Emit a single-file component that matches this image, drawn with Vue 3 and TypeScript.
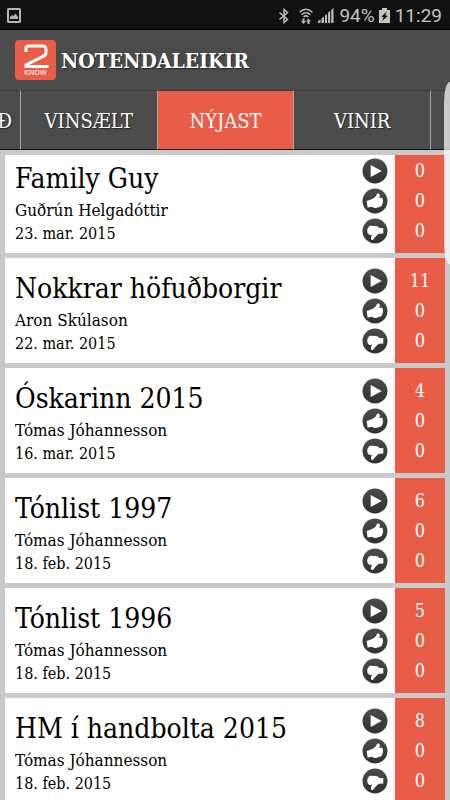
<script setup lang="ts">
interface Game {
  title: string
  author: string
  date: string
  plays: number
  likes: number
  dislikes: number
}

const tabs: string[] = ['Ð', 'VINSÆLT', 'NÝJAST', 'VINIR', '']
const activeTab = 'NÝJAST'

const games: Game[] = [
  { title: 'Family Guy', author: 'Guðrún Helgadóttir', date: '23. mar. 2015', plays: 0, likes: 0, dislikes: 0 },
  { title: 'Nokkrar höfuðborgir', author: 'Aron Skúlason', date: '22. mar. 2015', plays: 11, likes: 0, dislikes: 0 },
  { title: 'Óskarinn 2015', author: 'Tómas Jóhannesson', date: '16. mar. 2015', plays: 4, likes: 0, dislikes: 0 },
  { title: 'Tónlist 1997', author: 'Tómas Jóhannesson', date: '18. feb. 2015', plays: 6, likes: 0, dislikes: 0 },
  { title: 'Tónlist 1996', author: 'Tómas Jóhannesson', date: '18. feb. 2015', plays: 5, likes: 0, dislikes: 0 },
  { title: 'HM í handbolta 2015', author: 'Tómas Jóhannesson', date: '18. feb. 2015', plays: 8, likes: 0, dislikes: 0 },
]

const thumbUp =
  'M4.700 13L9.500 11.200C12.500 10.200 14 8.500 14.700 6.500Q15.200 4.900 16.800 5.600Q18.700 6.700 17.300 10L19.600 9.800Q21 10 20.700 11.600Q21.500 12.800 20.800 14Q21.200 15.400 20.200 16.400Q20.200 17.900 18.800 18.500L14 20Q11.500 20.200 10 18.800L5.500 19.600z'
const thumbDown =
  'M21.300 10.200L17.500 9.900Q16 8.200 13.500 8L8.500 7.800Q6.700 8 6.600 9.300Q5.200 10 5.500 11.400Q4.600 12.600 5.500 13.700Q5 15.200 6.300 15.800Q6.700 17 8.200 17L10 16.800Q8.900 19 8.900 20.500Q9.200 22.400 10.800 22C12.200 21.200 13 18.500 16.800 15.800L21.300 15.600z'
</script>

<template>
  <div class="screen">
    <div class="status">
      <svg class="shot" viewBox="0 0 14 15" width="14" height="15">
        <rect x="1" y="1" width="12" height="13" rx="0.5" fill="none" stroke="#b4b4b4" stroke-width="2" />
        <path d="M3 11V9l2-2 1.500 1L8.500 5.500 11 9v2z" fill="#b4b4b4" />
      </svg>
      <div class="indicators">
        <svg viewBox="0 0 12 16" width="12" height="16">
          <path d="M1.500 4.500l8 7L6 14.500v-13l3.500 3-8 7" fill="none" stroke="#b9b9b9" stroke-width="1.500" />
        </svg>
        <svg class="wifi" viewBox="0 0 14 16" width="14" height="16">
          <g fill="none" stroke="#b9b9b9" stroke-width="1.500">
            <path d="M.6 4.200Q7-1.800 13.400 4.200" />
            <path d="M2.600 6.800Q7 2.600 11.400 6.800" />
            <path d="M4.600 9Q7 6.800 9.400 9" />
          </g>
          <path d="M3.500 10.500h2v2.500H7L4.500 16 2 13h1.500zM8.500 16v-2.500H7L9.500 10.500l2.500 3h-1.500V16z" fill="#b9b9b9" />
        </svg>
        <svg class="signal" viewBox="0 0 16 15" width="16" height="15">
          <path d="M0 15v-2l2.500-1.500V15zM3.500 15v-4.500L6 8.500V15zM7 15V7.500L9 6v9zM10 15V4.500L12.200 3v12zM13.200 15V2L15.500 0v15z" fill="#b9b9b9" />
        </svg>
        <span class="percent">94%</span>
        <svg class="battery" viewBox="0 0 11 15" width="11" height="15">
          <path d="M3 0h5v2h3v13H0V2h3z" fill="#c4c4c4" />
          <path d="M7.800 3.500L2.500 8.500l2.200.8L3 13l5.800-5-2.500-.8z" fill="#111" />
        </svg>
        <span class="clock">11:29</span>
      </div>
    </div>

    <header class="header">
      <div class="logo">
        <svg viewBox="0 0 28 25" width="28" height="25" aria-hidden="true">
          <path d="M4 8V4.500Q4 2 6.500 2H20.500Q24 2 24 5V8.500Q24 11 21.500 12.200L4 21V22.500H26.500" fill="none" stroke="#fff" stroke-width="3" />
        </svg>
        <span class="know">KNOW</span>
      </div>
      <h1>NOTENDALEIKIR</h1>
    </header>

    <nav class="tabs">
      <button v-for="(tab, i) in tabs" :key="i" type="button" class="tab" :class="{ active: tab === activeTab }">{{ tab }}</button>
    </nav>

    <main class="viewport">
      <ul class="list">
        <li v-for="game in games" :key="game.title" class="card">
          <div class="info">
            <h2>{{ game.title }}</h2>
            <p class="author">{{ game.author }}</p>
            <p class="date">{{ game.date }}</p>
          </div>
          <div class="icons">
            <svg viewBox="0 0 26 26" width="26" height="26">
              <circle cx="13" cy="13" r="12.500" class="disc" />
              <path d="M8.700 7L19.700 13 8.700 19z" fill="#fff" />
            </svg>
            <svg viewBox="0 0 26 26" width="26" height="26">
              <circle cx="13" cy="13" r="12.500" class="disc" />
              <path class="thumb" :d="thumbUp" />
            </svg>
            <svg viewBox="0 0 26 26" width="26" height="26">
              <circle cx="13" cy="13" r="12.500" class="disc" />
              <path class="thumb" :d="thumbDown" />
            </svg>
          </div>
          <div class="counts">
            <span>{{ game.plays }}</span>
            <span>{{ game.likes }}</span>
            <span>{{ game.dislikes }}</span>
          </div>
        </li>
      </ul>
    </main>

    <svg width="0" height="0" class="defs" aria-hidden="true">
      <linearGradient id="discFill" x1="0" y1="0" x2="0" y2="1">
        <stop offset="0" stop-color="#4c4c4c" />
        <stop offset="1" stop-color="#303030" />
      </linearGradient>
    </svg>
    <div class="edge-handle"></div>
  </div>
</template>

<style>
body {
  margin: 0;
  background: #c9c9c9;
}
</style>

<style scoped>
.screen {
  position: relative;
  display: flex;
  flex-direction: column;
  height: 100vh;
  overflow: hidden;
  background: #c9c9c9;
  font-family: "Roboto Slab", "DejaVu Serif Condensed", "DejaVu Serif", serif;
}
.status {
  display: flex;
  flex: none;
  align-items: center;
  justify-content: space-between;
  box-sizing: border-box;
  height: 30px;
  padding: 2px 8px 0 7px;
  background: #111;
  border-bottom: 1px solid #000;
  color: #c4c4c4;
  font: 19px/28px Roboto, sans-serif;
}
.indicators {
  display: flex;
  align-items: center;
}
.wifi {
  margin-left: 9px;
}
.signal {
  margin-left: 5px;
}
.percent {
  margin-left: 5px;
}
.battery {
  margin-left: 4px;
}
.clock {
  margin-left: 5px;
}
.header {
  display: flex;
  flex: none;
  align-items: center;
  gap: 5px;
  height: 60px;
  padding: 0 15px;
  background: #4b4b4b;
}
.logo {
  display: flex;
  flex-direction: column;
  align-items: center;
  box-sizing: border-box;
  width: 41px;
  height: 40px;
  padding-top: 4px;
  border-radius: 4px;
  background: #e95d48;
  color: #fff;
}
.know {
  font: 7px/8px "DejaVu Sans", sans-serif;
}
h1 {
  margin: 0;
  padding-top: 2px;
  color: #fff;
  font-size: 21px;
  line-height: 30px;
  font-weight: 700;
  text-shadow: 1px 1px 1px #222;
}
.tabs {
  display: grid;
  flex: none;
  grid-template-columns: 21px 1fr 1fr 1fr 19px;
  height: 60px;
  background: #4b4b4b;
}
.tab {
  box-sizing: border-box;
  min-width: 0;
  padding: 2px 0 0;
  overflow: hidden;
  border: 0;
  border-top: 1px solid #3a3a3a;
  border-bottom: 1px solid #111;
  border-right: 1px solid #a5a5a5;
  background: #4b4b4b;
  color: #fff;
  font-family: inherit;
  font-size: 20px;
  line-height: 56px;
  text-shadow: 1px 1px 1px #222;
}
.tab:first-child {
  display: flex;
  justify-content: flex-end;
  padding-right: 8px;
}
.tab:last-child {
  border-right: 0;
}
.tab.active {
  background: #e95d48;
  text-shadow: none;
}
.viewport {
  flex: 1;
  min-height: 0;
  margin: 5px 5px 0;
  overflow: hidden;
}
/* The list rests slightly scrolled under the tab bar. */
.list {
  display: flex;
  flex-direction: column;
  gap: 5px;
  margin: -7px 0 0;
  padding: 0;
  list-style: none;
}
.card {
  display: flex;
  height: 105px;
  background: #fff;
}
.info {
  flex: 1;
  min-width: 0;
  padding: 12px 0 0 10px;
  color: #000;
}
h2 {
  margin: 0;
  font-size: 28px;
  line-height: 38px;
  font-weight: 400;
  white-space: nowrap;
}
p {
  margin: 0;
  line-height: 24px;
}
.author {
  font-size: 17px;
}
.date {
  font-size: 16px;
}
.icons,
.counts {
  display: grid;
  grid-auto-rows: 30px;
  align-items: center;
  align-content: start;
  padding-top: 8px;
}
.icons {
  width: 33px;
}
.disc {
  fill: url(#discFill);
}
.thumb {
  fill: #fff;
}
.counts {
  width: 50px;
  background: #e95d48;
  color: #fff;
  font-size: 18px;
  line-height: 30px;
  text-align: center;
}
.defs {
  position: absolute;
}
.edge-handle {
  position: absolute;
  top: 82px;
  right: 0;
  width: 6px;
  height: 182px;
  border-radius: 6px 0 0 6px / 20px 0 0 20px;
  background: rgba(255, 255, 255, 0.7);
}
</style>
